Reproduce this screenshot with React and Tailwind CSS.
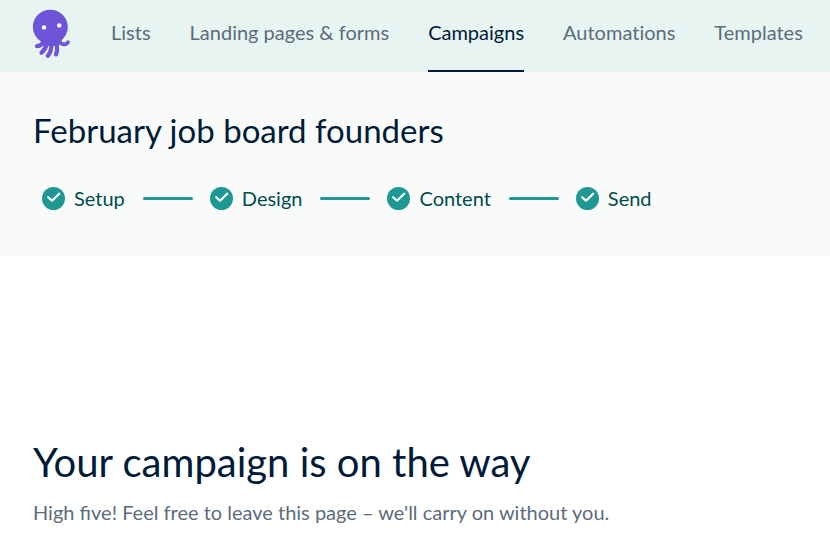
const nav = ["Lists", "Landing pages & forms", "Campaigns", "Automations", "Templates"];
const steps = ["Setup", "Design", "Content", "Send"];

function Octopus() {
  return (
    <svg viewBox="32 9 39 50" className="h-[50px] w-[39px]" aria-hidden="true">
      <path d="M50.300 9.800C60 9.800 67.800 17.500 67.800 27C67.800 33 64.500 37.500 61.500 40.500L58.500 46H43L40.500 41C36 38 32.900 33 32.900 27C32.900 17.500 40.600 9.800 50.300 9.800Z" fill="#6e54d7" />
      <g fill="none" stroke="#6e54d7" strokeWidth="4.200" strokeLinecap="round" strokeLinejoin="round">
        <path d="M43.500 42C42 44.500 40 46.200 37 46.200" />
        <path d="M47 43.500C46 48 44 50.500 41.500 52.800" />
        <path d="M51.500 43.500C51.500 49 50.500 53 47.800 55.800" />
        <path d="M56.500 43.500C57.500 48 57.300 51.500 56 54.300" />
        <path d="M59.500 41.500C62 45.500 66 45 68 42.300" strokeWidth="3.800" />
      </g>
      <circle cx="44" cy="27.400" r="2.200" fill="#fff" />
      <circle cx="59.300" cy="25.400" r="2.200" fill="#fff" />
    </svg>
  );
}

export default function App() {
  return (
    <div className="min-h-screen overflow-x-hidden bg-white font-['Lato',sans-serif] text-[#001b38]">
      <header className="flex h-[72px] items-start bg-[#e7f4f2] pl-8">
        <a href="#home" aria-label="Home" className="mt-[9px] shrink-0"><Octopus /></a>
        <nav className="ml-10 flex h-full gap-[39px] whitespace-nowrap text-xl [font-variant-ligatures:none]">
          {nav.map((n) => (
            <a key={n} href="#nav" className={n === "Campaigns" ? "border-b-2 border-[#001b38] pt-[18px] leading-7" : "pt-[18px] leading-7 text-[#5c6c7b]"}>{n}</a>
          ))}
        </nav>
      </header>
      <section className="bg-[#f9fbfa] px-[33px] pt-[34px] pb-11">
        <h1 className="text-[33px] leading-[48px]">February job board founders</h1>
        <ol className="mt-[30px] ml-[9px] flex items-center text-xl leading-7">
          {steps.map((s, i) => (
            <li key={s} className="flex items-center">
              {i > 0 && <span className="mr-[17px] ml-[18px] h-[3px] w-[50px] rounded-full bg-[#1f9893]" />}
              <svg viewBox="0 0 23 23" className="mr-[9px] size-[23px]" aria-hidden="true">
                <circle cx="11.500" cy="11.500" r="11.500" fill="#1f9893" />
                <path d="M6.200 10.200L10 13.700L17.200 6.700" fill="none" stroke="#fff" strokeWidth="2.200" strokeLinecap="round" strokeLinejoin="round" />
              </svg>
              <span className="text-[#004c4c]">{s}</span>
            </li>
          ))}
        </ol>
      </section>
      <main className="px-[33px] pt-[179px]">
        <h2 className="text-[40px] leading-[54px]">Your campaign is on the way</h2>
        <p className="mt-[9px] text-xl leading-7 text-[#5c6c7b]">High five! Feel free to leave this page – we'll carry on without you.</p>
      </main>
    </div>
  );
}
